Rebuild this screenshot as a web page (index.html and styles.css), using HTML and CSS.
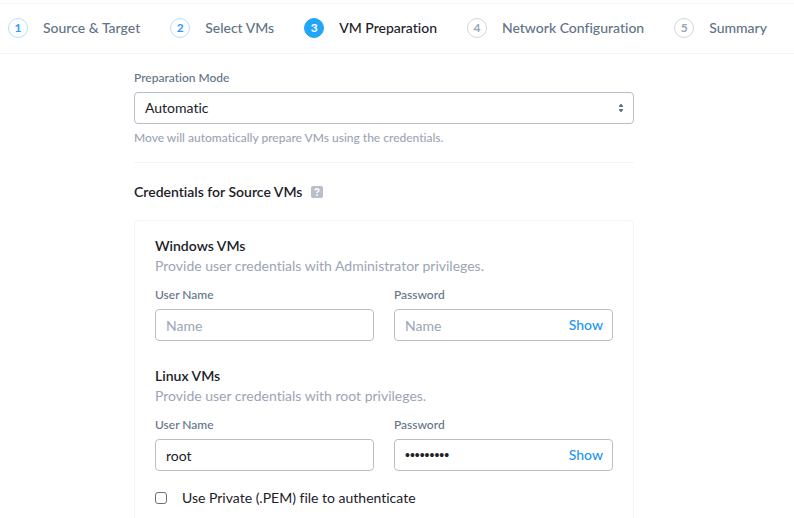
FILE: index.html
```html
<!DOCTYPE html>
<html lang="en">
<head>
<meta charset="utf-8">
<meta name="viewport" content="width=device-width, initial-scale=1">
<title>VM Preparation</title>
<link rel="stylesheet" href="styles.css">
</head>
<body>
<nav class="steps-bar" aria-label="Migration plan steps">
  <ol class="steps">
    <li class="step step-done"><span class="step-number">1</span><span class="step-label">Source &amp; Target</span></li>
    <li class="step step-done"><span class="step-number">2</span><span class="step-label">Select VMs</span></li>
    <li class="step step-current" aria-current="step"><span class="step-number">3</span><span class="step-label">VM Preparation</span></li>
    <li class="step"><span class="step-number">4</span><span class="step-label">Network Configuration</span></li>
    <li class="step"><span class="step-number">5</span><span class="step-label">Summary</span></li>
  </ol>
</nav>
<main class="content">
  <form class="form">
    <section class="mode">
      <label class="label" for="mode">Preparation Mode</label>
      <div class="control">
        <select class="field" id="mode"><option>Automatic</option></select>
        <svg class="arrows" width="6" height="8" viewBox="0 0 6 8" aria-hidden="true"><path d="M2.5 0h1L5 2v1H1V2zM2.500 8h1L5 6V5H1v1z"/></svg>
      </div>
      <p class="hint">Move will automatically prepare VMs using the credentials.</p>
    </section>
    <h2 class="heading">Credentials for Source VMs
      <svg class="help" width="12" height="12" viewBox="0 0 12 12" aria-hidden="true"><rect class="help-box" width="12" height="12" rx="2"/><path class="help-mark" d="M4.100 4.500C4.100 3.300 4.900 2.700 6 2.700s1.900.6 1.900 1.600C7.900 5.600 6 5.600 6 7.100"/><circle class="help-dot" cx="6" cy="9" r=".9"/></svg>
    </h2>
    <div class="card">
      <section class="group">
        <h3 class="title">Windows VMs</h3>
        <p class="description">Provide user credentials with Administrator privileges.</p>
        <div class="columns">
          <div>
            <label class="label" for="win-user">User Name</label>
            <div class="control"><input class="field" id="win-user" type="text" placeholder="Name"></div>
          </div>
          <div>
            <label class="label" for="win-pass">Password</label>
            <div class="control"><input class="field" id="win-pass" type="password" placeholder="Name"><button class="show" type="button">Show</button></div>
          </div>
        </div>
      </section>
      <section class="group">
        <h3 class="title">Linux VMs</h3>
        <p class="description">Provide user credentials with root privileges.</p>
        <div class="columns">
          <div>
            <label class="label" for="linux-user">User Name</label>
            <div class="control"><input class="field" id="linux-user" type="text" value="root"></div>
          </div>
          <div>
            <label class="label" for="linux-pass">Password</label>
            <div class="control"><input class="field field-masked" id="linux-pass" type="password" value="password1"><button class="show" type="button">Show</button></div>
          </div>
        </div>
        <div class="option">
          <input class="checkbox" id="pem" type="checkbox">
          <label for="pem">Use Private (.PEM) file to authenticate</label>
        </div>
      </section>
    </div>
  </form>
</main>
</body>
</html>
```
FILE: styles.css
```css
* {
  box-sizing: border-box;
}

html {
  scrollbar-width: none;
}

body {
  margin: 0;
  padding-top: 3px;
  background: #fff;
  color: #1c2128;
  font: 14px/20px Lato, "Liberation Sans", sans-serif;
  font-variant-ligatures: none;
}

h2, h3, p, ol {
  margin: 0;
  padding: 0;
}

.steps-bar {
  border-top: 1px solid #f2f4f6;
  border-bottom: 1px solid #f2f4f6;
  padding: 14px 27px 15px 8px;
}

.steps {
  display: flex;
  justify-content: space-between;
  list-style: none;
}

.step {
  display: flex;
  gap: 15px;
  color: #627386;
  font-weight: 500;
  white-space: nowrap;
}

.step-number {
  width: 20px;
  height: 20px;
  border: 1px solid #d1d5df;
  border-radius: 50%;
  color: #9aa5b5;
  font-size: 12px;
  font-weight: 700;
  line-height: 18px;
  text-align: center;
}

.step-done .step-number {
  border-color: #b5e0fc;
  color: #3597f5;
}

.step-current {
  color: #1c2128;
}

.step-current .step-number {
  border-color: #22a5f7;
  background: #22a5f7;
  color: #fff;
}

.content {
  padding: 14px 26px 20px 0;
}

.form {
  max-width: 500px;
  margin: 0 auto;
}

.mode {
  padding-bottom: 14px;
  border-bottom: 1px solid #f2f4f6;
}

.label {
  display: block;
  margin-bottom: 4px;
  color: #627386;
  font-size: 12px;
  font-weight: 500;
}

.control {
  display: flex;
  align-items: center;
  height: 32px;
  padding: 0 9px 0 10px;
  border: 1px solid #b8bfca;
  border-radius: 4px;
}

.control:focus-within {
  border-color: #22a5f7;
}

.field {
  flex: 1;
  min-width: 0;
  width: 100%;
  height: 30px;
  padding: 0;
  border: 0;
  outline: 0;
  background: none;
  color: #1c2128;
  font: inherit;
  appearance: none;
}

.field::placeholder {
  color: #9aa5b5;
}

.field-masked {
  font-family: "Liberation Sans", sans-serif;
}

.arrows {
  fill: #627386;
}

.hint {
  margin-top: 4px;
  color: #9aa5b5;
  font-size: 12px;
  font-weight: 500;
}

.heading {
  display: flex;
  align-items: center;
  gap: 9px;
  margin: 19px 0 18px;
  font-size: 14px;
  font-weight: 600;
}

.help-box {
  fill: #b8bfca;
}

.help-mark {
  fill: none;
  stroke: #fff;
  stroke-width: 1.5;
}

.help-dot {
  fill: #fff;
}

.card {
  padding: 15px 20px 20px;
  border: 1px solid #f2f4f6;
  border-radius: 4px;
}

.group + .group {
  margin-top: 25px;
}

.title {
  font-size: 14px;
  font-weight: 600;
}

.description {
  color: #9aa5b5;
}

.columns {
  display: grid;
  grid-template-columns: repeat(2, minmax(0, 1fr));
  gap: 20px;
  margin-top: 9px;
}

.show {
  padding: 0;
  border: 0;
  background: none;
  color: #2196f3;
  font: inherit;
  font-weight: 500;
  cursor: pointer;
}

.option {
  display: flex;
  align-items: center;
  gap: 15px;
  margin-top: 17px;
}

.checkbox {
  width: 12px;
  height: 12px;
  margin: 0;
  border: 1px solid #627386;
  border-radius: 3px;
  appearance: none;
}

.checkbox:checked {
  border-color: #22a5f7;
  background: #22a5f7;
}
```
